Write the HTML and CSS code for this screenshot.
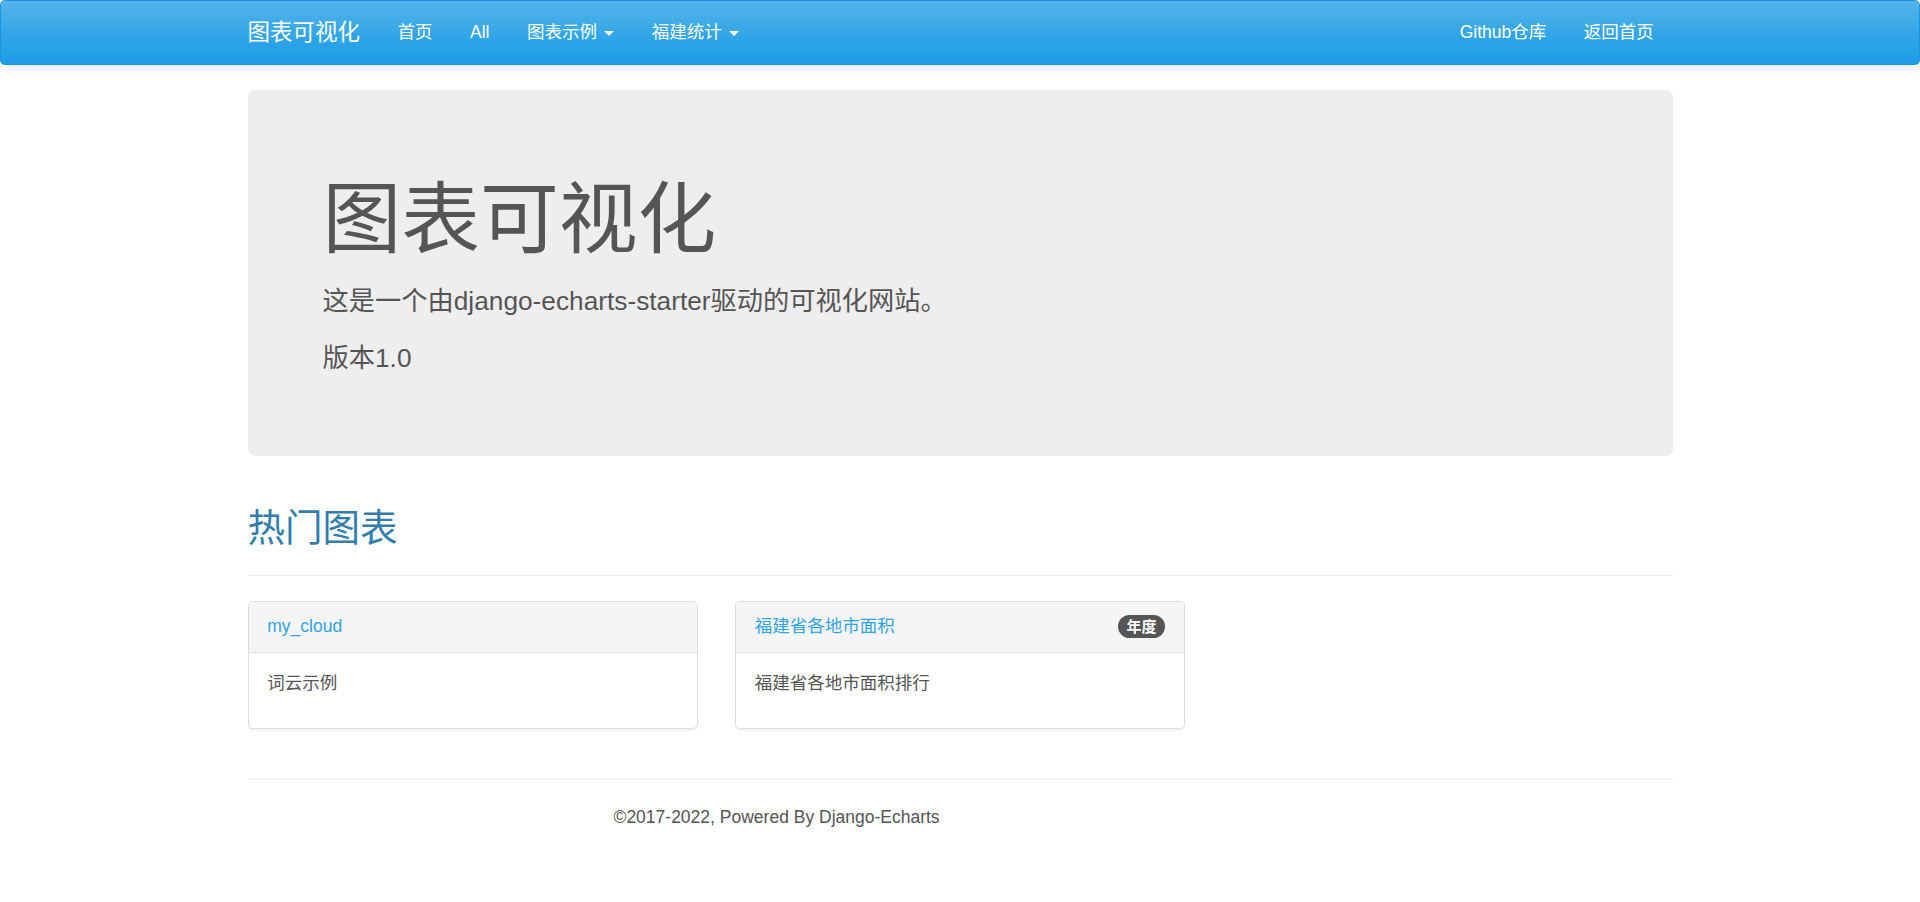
FILE: index.html
```html
<!DOCTYPE html>
<html lang="zh-CN">
<head>
<meta charset="utf-8">
<title>图表可视化</title>
<link rel="stylesheet" href="styles.css">
</head>
<body>
<div class="page">
  <nav class="navbar">
    <div class="container nav-inner">
      <a class="brand" href="#">图表可视化</a>
      <ul class="nav">
        <li><a href="#">首页</a></li>
        <li><a href="#">All</a></li>
        <li><a href="#">图表示例 <span class="caret"></span></a></li>
        <li><a href="#">福建统计 <span class="caret"></span></a></li>
      </ul>
      <ul class="nav nav-right">
        <li><a href="#">Github仓库</a></li>
        <li><a href="#">返回首页</a></li>
      </ul>
    </div>
  </nav>

  <main class="container">
    <div class="jumbotron">
      <h1>图表可视化</h1>
      <p>这是一个由django-echarts-starter驱动的可视化网站。</p>
      <p>版本1.0</p>
    </div>

    <div class="page-header">
      <h2>热门图表</h2>
    </div>

    <div class="cards">
      <div class="panel">
        <div class="panel-heading">
          <a class="panel-title" href="#">my_cloud</a>
        </div>
        <div class="panel-body">
          <p>词云示例</p>
        </div>
      </div>
      <div class="panel">
        <div class="panel-heading">
          <a class="panel-title" href="#">福建省各地市面积</a>
          <span class="badge">年度</span>
        </div>
        <div class="panel-body">
          <p>福建省各地市面积排行</p>
        </div>
      </div>
    </div>

    <hr class="divider">

    <footer class="footer">
      <p class="footer-text">©2017-2022, Powered By Django-Echarts</p>
    </footer>
  </main>
</div>
</body>
</html>
```

FILE: styles.css
```css
html, body {
  margin: 0;
  padding: 0;
  background: #ffffff;
}

.page {
  zoom: 1.25;
  font-family: "Liberation Sans", Arial, "Noto Sans CJK SC", sans-serif;
  font-size: 14px;
  line-height: 1.42857143;
  color: #555555;
}

a {
  text-decoration: none;
}

.container {
  width: 1140px;
  margin: 0 auto;
}

/* navbar */
.navbar {
  height: 50px;
  margin-bottom: 20px;
  border: 1px solid #1995dc;
  border-radius: 4px;
  background-image: linear-gradient(#54b4eb, #2fa4e7 60%, #1d9ce5);
  box-shadow: 0 1px 10px rgba(0, 0, 0, 0.1);
}

.nav-inner {
  display: flex;
  align-items: stretch;
  height: 50px;
}

.brand {
  display: block;
  margin-left: -15px;
  padding: 15px;
  height: 20px;
  font-size: 18px;
  line-height: 20px;
  color: #ffffff;
}

.nav {
  display: flex;
  margin: 0;
  padding: 0;
  list-style: none;
}

.nav-right {
  margin-left: auto;
}

.nav a {
  display: block;
  padding: 15px;
  line-height: 20px;
  color: #ffffff;
}

.caret {
  display: inline-block;
  width: 0;
  height: 0;
  margin-left: 2px;
  vertical-align: middle;
  border-top: 4px dashed;
  border-right: 4px solid transparent;
  border-left: 4px solid transparent;
}

/* jumbotron */
.jumbotron {
  padding: 48px 60px;
  margin-bottom: 30px;
  background: #eeeeee;
  border-radius: 6px;
}

.jumbotron h1 {
  margin: 20px 0 14px;
  font-size: 63px;
  line-height: 73px;
  font-weight: 400;
  color: inherit;
}

.jumbotron p {
  margin: 0 0 15px;
  font-size: 21px;
  font-weight: 400;
}

/* section header */
.page-header {
  margin: 40px 0 20px;
  padding-bottom: 9px;
  border-bottom: 1px solid #eeeeee;
}

.page-header h2 {
  margin: 20px 0 10px;
  font-size: 30px;
  line-height: 36px;
  font-weight: 400;
  color: #317eac;
}

/* cards */
.cards {
  display: grid;
  grid-template-columns: repeat(3, 360px);
  column-gap: 30px;
}

.panel {
  margin-bottom: 20px;
  background: #ffffff;
  border: 1px solid #dddddd;
  border-radius: 4px;
  box-shadow: 0 1px 1px rgba(0, 0, 0, 0.05);
}

.panel-heading {
  display: flex;
  justify-content: space-between;
  align-items: center;
  padding: 10px 15px;
  background: #f5f5f5;
  border-bottom: 1px solid #dddddd;
  border-radius: 3px 3px 0 0;
}

.panel-title {
  color: #2fa4e7;
  font-size: 14px;
  line-height: 20px;
}

.badge {
  display: inline-block;
  padding: 3px 7px;
  font-size: 12px;
  font-weight: 700;
  line-height: 1;
  color: #ffffff;
  background: #555555;
  border-radius: 10px;
}

.panel-body {
  padding: 15px;
}

.panel-body p {
  margin: 0 0 10px;
}

/* footer */
.divider {
  margin: 20px 0;
  border: 0;
  border-top: 1px solid #eeeeee;
}

.footer {
  display: grid;
  grid-template-columns: 9fr 3fr;
  column-gap: 30px;
}

.footer-text {
  margin: 0 0 10px;
  padding-left: 14px;
  text-align: center;
}
```
